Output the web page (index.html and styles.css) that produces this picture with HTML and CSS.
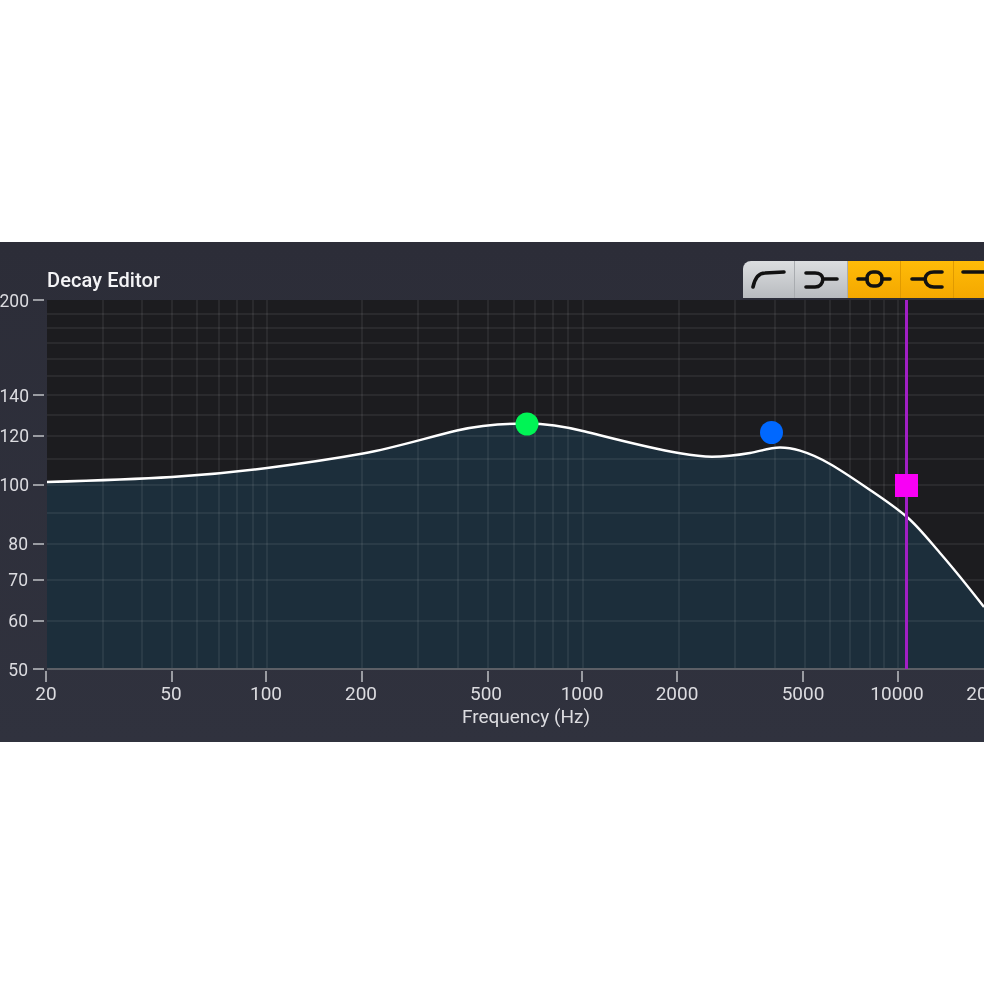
FILE: index.html
```html
<!DOCTYPE html>
<html lang="en">
<head>
<meta charset="utf-8">
<title>Decay Editor</title>
<link rel="stylesheet" href="styles.css">
</head>
<body>
<main class="page">
  <section class="panel">
    <header class="panel-head">
      <h1 class="title">Decay Editor</h1>
      <div class="tabs">
        <button class="tab tab-grey tab-first"><svg class="icon" viewBox="0 0 53 37"><path d="M10 26Q13 12 22 12L41 11"/></svg></button>
        <button class="tab tab-grey"><svg class="icon" viewBox="0 0 53 37"><path d="M11 12H20Q27 12 28 18H42M11 26H20Q27 26 28 18"/></svg></button>
        <button class="tab tab-amber"><svg class="icon" viewBox="0 0 53 37"><path d="M10 18H19M34 18H42"/><rect x="19" y="11" width="15" height="14" rx="6"/></svg></button>
        <button class="tab tab-amber"><svg class="icon" viewBox="0 0 53 37"><path d="M11 18H24M41 11H33Q25 11 24 18Q25 26 33 26H41"/></svg></button>
        <button class="tab tab-amber"><svg class="icon" viewBox="0 0 53 37"><path d="M9 11H34Q40 11 44 18"/></svg></button>
      </div>
    </header>
    <svg class="chart" viewBox="0 300 984 442" width="984" height="442">
      <rect class="plot-bg" x="47" y="300" width="937" height="369"/>
      <path class="area" d="M47 482C88.67 480.75 130.33 479.5 172 477C203.67 475.1 235.33 472.12 267 468C299 463.84 331 459.26 363 453.5C394.33 447.86 425.67 438.02 457 430.5C480.33 424.9 503.67 423.5 527 423.5C546.33 423.5 565.67 426.67 585 431.5C616.67 439.42 648.33 447.92 680 453.3C690.67 455.11 701.33 456.7 712 456.7C724.67 456.7 737.33 455.15 750 453C760 451.3 770 447.5 780 447.5C786.67 447.5 793.33 448.7 800 450.7C810 453.7 820 458.3 830 464C843.33 471.6 856.67 480.93 870 490C882.33 498.39 894.67 506.52 907 517C918 526.35 929 540.35 940 553C954.67 569.87 969.33 588.22 984 607V669H47Z"/>
      <path class="grid" d="M103 300V669M142 300V669M172 300V669M197 300V669M219 300V669M237 300V669M253 300V669M267 300V669M362 300V669M418 300V669M458 300V669M488 300V669M514 300V669M535 300V669M553 300V669M568 300V669M583 300V669M679 300V669M735 300V669M775 300V669M805 300V669M830 300V669M850 300V669M870 300V669M884 300V669M898 300V669"/>
      <path class="grid" d="M47 314H984M47 328H984M47 343H984M47 359H984M47 376H984M47 395H984M47 415H984M47 436H984M47 459H984M47 485H984M47 513H984M47 544H984M47 580H984M47 621H984"/>
      <path class="curve" d="M47 482C88.67 480.75 130.33 479.5 172 477C203.67 475.1 235.33 472.12 267 468C299 463.84 331 459.26 363 453.5C394.33 447.86 425.67 438.02 457 430.5C480.33 424.9 503.67 423.5 527 423.5C546.33 423.5 565.67 426.67 585 431.5C616.67 439.42 648.33 447.92 680 453.3C690.67 455.11 701.33 456.7 712 456.7C724.67 456.7 737.33 455.15 750 453C760 451.3 770 447.5 780 447.5C786.67 447.5 793.33 448.7 800 450.7C810 453.7 820 458.3 830 464C843.33 471.6 856.67 480.93 870 490C882.33 498.39 894.67 506.52 907 517C918 526.35 929 540.35 940 553C954.67 569.87 969.33 588.22 984 607"/>
      <path class="axis" d="M47 669H984"/>
      <path class="tick" d="M33 300H44M33 395H44M33 436H44M33 485H44M33 544H44M33 580H44M33 621H44M33 669H44M46 671V682M172 671V682M266 671V682M362 671V682M488 671V682M582 671V682M677 671V682M803 671V682M898 671V682"/>
      <rect class="marker-line" x="905" y="300" width="3" height="369"/>
      <rect class="marker-square" x="895" y="474" width="23" height="23"/>
      <circle class="marker-green" cx="527" cy="424" r="11.5"/>
      <circle class="marker-blue" cx="771.5" cy="432.5" r="11.5"/>
      <g class="y-labels">
        <text x="29" y="307">200</text>
        <text x="29" y="402">140</text>
        <text x="29" y="442">120</text>
        <text x="29" y="491">100</text>
        <text x="28" y="550">80</text>
        <text x="28" y="586">70</text>
        <text x="28" y="627">60</text>
        <text x="28" y="676">50</text>
      </g>
      <g class="x-labels">
        <text x="46" y="700">20</text>
        <text x="171" y="700">50</text>
        <text x="266" y="700">100</text>
        <text x="361" y="700">200</text>
        <text x="486" y="700">500</text>
        <text x="582" y="700">1000</text>
        <text x="677" y="700">2000</text>
        <text x="803" y="700">5000</text>
        <text x="897" y="700">10000</text>
        <text x="993" y="700">20000</text>
        <text class="x-title" x="526" y="723">Frequency (Hz)</text>
      </g>
    </svg>
  </section>
</main>
</body>
</html>
```
FILE: styles.css
```css
html, body {
  margin: 0;
  padding: 0;
  background: #fff;
}
.page {
  padding-top: 242px;
  height: 743px;
  overflow: hidden;
}
.panel {
  width: 984px;
  height: 500px;
  background: linear-gradient(#2c2d38, #30323e);
  overflow: hidden;
  filter: blur(0.7px);
  font-family: Roboto, "Liberation Sans", sans-serif;
}
.panel-head {
  height: 58px;
  display: flex;
  justify-content: space-between;
  align-items: flex-end;
  padding-left: 47px;
  box-sizing: border-box;
}
.title {
  margin: 0 0 8px;
  font-size: 20px;
  line-height: 24px;
  font-weight: 500;
  letter-spacing: 0.1px;
  color: #f4f4f6;
}
.tabs {
  display: flex;
  flex: none;
  width: 241px;
  margin-bottom: 2px;
  overflow: hidden;
}
.tab {
  flex: none;
  width: 53px;
  height: 37px;
  padding: 0;
  border: 0;
  display: block;
}
.tab-first {
  border-top-left-radius: 8px;
  width: 52px;
}
.tab-grey {
  background: linear-gradient(#dcdee0, #b8bbbf);
  box-shadow: inset -1px 0 0 #a9acb0;
}
.tab-amber {
  background: linear-gradient(#ffbb08, #f4a800);
  box-shadow: inset -1px 0 0 #e09a00;
}
.icon {
  display: block;
  width: 53px;
  height: 37px;
  fill: none;
  stroke: #111;
  stroke-width: 3.6;
  stroke-linecap: round;
  stroke-linejoin: round;
}
.chart {
  display: block;
  overflow: visible;
}
.plot-bg {
  fill: #1c1c1f;
}
.area {
  fill: #1c2e3b;
}
.grid {
  fill: none;
  stroke: rgba(255, 255, 255, 0.13);
  stroke-width: 1;
}
.curve {
  fill: none;
  stroke: #fff;
  stroke-width: 2.4;
}
.axis {
  fill: none;
  stroke: #5c5f66;
  stroke-width: 2;
}
.tick {
  fill: none;
  stroke: #9a9ca2;
  stroke-width: 2;
}
.marker-line {
  fill: #a11fc4;
}
.marker-square {
  fill: #f800f5;
}
.marker-green {
  fill: #00f455;
}
.marker-blue {
  fill: #0068ff;
}
.y-labels text,
.x-labels text {
  fill: #dcdce0;
}
.y-labels text {
  font-size: 17.5px;
  text-anchor: end;
}
.x-labels text {
  font-size: 19px;
  text-anchor: middle;
}
```
